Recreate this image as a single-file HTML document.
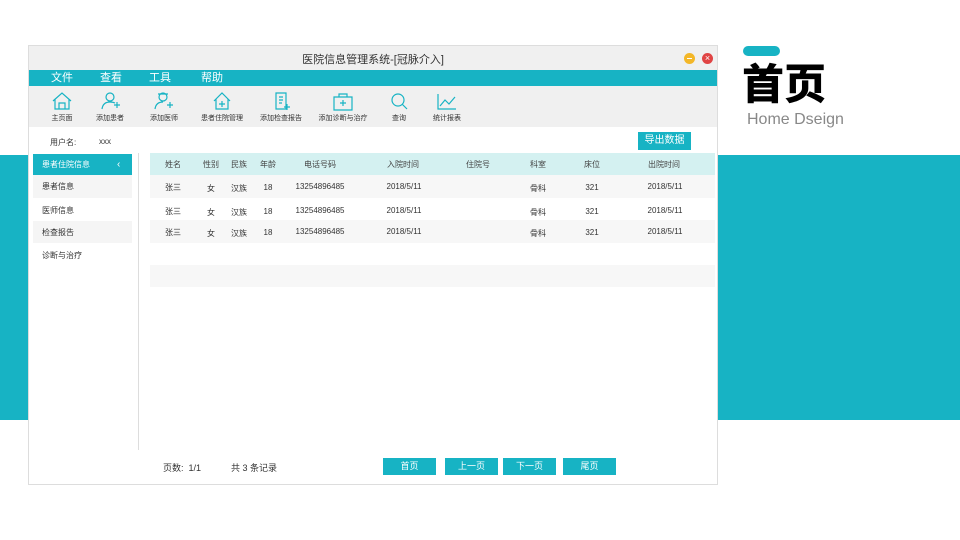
<!DOCTYPE html>
<html><head><meta charset="utf-8"><style>
*{margin:0;padding:0;box-sizing:border-box}
body{width:960px;height:540px;position:relative;background:#fff;overflow:hidden;font-family:"Liberation Sans","Noto Sans CJK SC",sans-serif;color:#333}
.a{position:absolute}
.c{position:absolute;transform:translateX(-50%);white-space:nowrap}
.btn{position:absolute;background:#17b3c4;color:#fff;font-size:9px;text-align:center;line-height:17px;height:17px}
.lab{position:absolute;top:113px;font-size:7px;transform:translateX(-50%);white-space:nowrap;color:#333}
.th{font-size:8px;color:#444;top:159px}
.td{font-size:8px;color:#333}
</style></head><body>
<div class="a" style="left:0;top:155px;width:960px;height:265px;background:#17b3c4"></div>
<div class="a" style="left:743px;top:46px;width:37px;height:10px;border-radius:5px;background:#17b3c4"></div>
<div class="a" style="left:742px;top:58px;font-size:42px;font-weight:900;color:#000;line-height:54px">首页</div>
<div class="a" style="left:747px;top:111px;font-size:16px;color:#888">Home Dseign</div>

<div class="a" style="left:28px;top:45px;width:690px;height:440px;background:#fff;border:1px solid #ddd"></div>
<div class="a" style="left:29px;top:46px;width:688px;height:24px;background:#f0f0f0"></div>
<div class="c" style="left:373px;top:51px;font-size:11px;color:#333">医院信息管理系统-[冠脉介入]</div>
<div class="a" style="left:684px;top:53px;width:11px;height:11px;border-radius:50%;background:#f3b728"><div class="a" style="left:3px;top:5px;width:5px;height:1px;background:#fff"></div></div>
<div class="a" style="left:702px;top:53px;width:11px;height:11px;border-radius:50%;background:#e04444;color:#fff;font-size:9px;line-height:11px;text-align:center">×</div>
<div class="a" style="left:29px;top:70px;width:688px;height:16px;background:#17b3c4;color:#fff;font-size:11px;line-height:16px">
<span class="a" style="left:22px">文件</span><span class="a" style="left:71px">查看</span><span class="a" style="left:120px">工具</span><span class="a" style="left:172px">帮助</span></div>
<div class="a" style="left:29px;top:86px;width:688px;height:41px;background:#f0f0f0"></div>
<svg class="a" style="left:0;top:0" width="720" height="130" fill="none" stroke="#17b3c4" stroke-width="1.2">
<path d="M53 101 L62 93 L71 101 M55 99 V109 H69 V99 M59 109 V103 H65 V109"/>
<circle cx="110" cy="97" r="4"/><path d="M102 109 Q103 102 110 102 Q113 102 115 103 M114 105 H120 M117 102 V108"/>
<circle cx="163" cy="97" r="4"/><path d="M158 94 H168 M155 109 Q156 102 163 102 M167 105 H173 M170 102 V108"/>
<path d="M214 101 L222 93 L230 101 M216 99 V109 H228 V99 M219 104 H225 M222 101 V107"/>
<path d="M276 93 H286 V109 H276 Z M279 97 H283 M279 100 H283 M279 103 H282 M284 107 H290 M287 104 V110"/>
<path d="M334 97 H352 V110 H334 Z M339 97 V94 H347 V97 M340 103 H346 M343 100 V106"/>
<circle cx="398" cy="100" r="6"/><path d="M402 104 L407 109"/>
<path d="M438 94 V109 H456 M440 106 L445 100 L449 104 L455 97"/>
</svg>
<div class="lab" style="left:62px">主页面</div><div class="lab" style="left:110px">添加患者</div><div class="lab" style="left:164px">添加医师</div><div class="lab" style="left:222px">患者住院管理</div><div class="lab" style="left:281px">添加检查报告</div><div class="lab" style="left:343px">添加诊断与治疗</div><div class="lab" style="left:399px">查询</div><div class="lab" style="left:447px">统计报表</div>

<div class="a" style="left:50px;top:137px;font-size:8px">用户名:</div>
<div class="a" style="left:99px;top:137px;font-size:8px">xxx</div>
<div class="btn" style="left:638px;top:132px;width:53px;height:18px;line-height:18px;font-size:10px">导出数据</div>

<div class="a" style="left:33px;top:154px;width:99px;height:21px;background:#17b3c4;color:#fff;font-size:8px;line-height:21px;padding-left:9px">患者住院信息<span class="a" style="left:84px;font-size:10px">‹</span></div>
<div class="a" style="left:33px;top:175px;width:99px;height:23px;background:#f5f5f5"></div>
<div class="a" style="left:33px;top:221px;width:99px;height:22px;background:#f5f5f5"></div>
<div class="a td" style="left:42px;top:181px">患者信息</div>
<div class="a td" style="left:42px;top:205px">医师信息</div>
<div class="a td" style="left:42px;top:227px">检查报告</div>
<div class="a td" style="left:42px;top:250px">诊断与治疗</div>
<div class="a" style="left:138px;top:153px;width:1px;height:297px;background:#ddd"></div>

<div class="a" style="left:150px;top:153px;width:565px;height:22px;background:#d4f1f1"></div>
<div class="a" style="left:150px;top:175px;width:565px;height:23px;background:#f7f7f7"></div>
<div class="a" style="left:150px;top:220px;width:565px;height:23px;background:#f7f7f7"></div>
<div class="a" style="left:150px;top:265px;width:565px;height:22px;background:#f7f7f7"></div>
<div class="c th" style="left:173px">姓名</div><div class="c th" style="left:211px">性别</div><div class="c th" style="left:239px">民族</div><div class="c th" style="left:268px">年龄</div><div class="c th" style="left:320px">电话号码</div><div class="c th" style="left:403px">入院时间</div><div class="c th" style="left:478px">住院号</div><div class="c th" style="left:538px">科室</div><div class="c th" style="left:592px">床位</div><div class="c th" style="left:664px">出院时间</div>

<div class="c td" style="left:173px;top:182px">张三</div><div class="c td" style="left:211px;top:183px">女</div><div class="c td" style="left:239px;top:183px">汉族</div><div class="c td" style="left:268px;top:183px">18</div><div class="c td" style="left:320px;top:182px">13254896485</div><div class="c td" style="left:404px;top:182px">2018/5/11</div><div class="c td" style="left:538px;top:183px">骨科</div><div class="c td" style="left:592px;top:183px">321</div><div class="c td" style="left:665px;top:182px">2018/5/11</div>
<div class="c td" style="left:173px;top:206px">张三</div><div class="c td" style="left:211px;top:207px">女</div><div class="c td" style="left:239px;top:207px">汉族</div><div class="c td" style="left:268px;top:207px">18</div><div class="c td" style="left:320px;top:206px">13254896485</div><div class="c td" style="left:404px;top:206px">2018/5/11</div><div class="c td" style="left:538px;top:207px">骨科</div><div class="c td" style="left:592px;top:207px">321</div><div class="c td" style="left:665px;top:206px">2018/5/11</div>
<div class="c td" style="left:173px;top:227px">张三</div><div class="c td" style="left:211px;top:228px">女</div><div class="c td" style="left:239px;top:228px">汉族</div><div class="c td" style="left:268px;top:228px">18</div><div class="c td" style="left:320px;top:227px">13254896485</div><div class="c td" style="left:404px;top:227px">2018/5/11</div><div class="c td" style="left:538px;top:228px">骨科</div><div class="c td" style="left:592px;top:228px">321</div><div class="c td" style="left:665px;top:227px">2018/5/11</div>

<div class="a" style="left:163px;top:461px;font-size:9px">页数:&nbsp; 1/1</div>
<div class="a" style="left:231px;top:461px;font-size:9px">共 3 条记录</div>
<div class="btn" style="left:383px;top:458px;width:53px">首页</div>
<div class="btn" style="left:445px;top:458px;width:53px">上一页</div>
<div class="btn" style="left:503px;top:458px;width:53px">下一页</div>
<div class="btn" style="left:563px;top:458px;width:53px">尾页</div>
</body></html>
